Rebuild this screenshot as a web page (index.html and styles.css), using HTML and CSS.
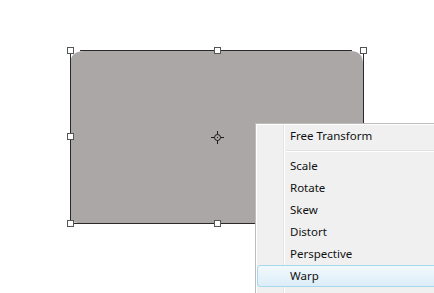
FILE: index.html
```html
<!DOCTYPE html>
<html lang="en">

<head>
    <meta charset="UTF-8">
    <title>Transform Menu</title>
    <link rel="stylesheet" href="styles.css">
</head>

<body>
    <div class="stage">
        <svg class="canvas" width="434" height="293" viewBox="0 0 434 293">
            <!-- shape fill -->
            <path class="shape" d="M84 51 H350 Q363 51 363 64 V223 H78 Q70 223 70 215 V65 Q70 51 84 51 Z" />
            <!-- outline -->
            <path class="edge" d="M70.5 54 V223.5 H363.5 V54 M80 50.5 H352" />

            <!-- handles -->
            <rect class="handle" x="67.5" y="47.5" width="6" height="6" />
            <rect class="handle" x="214.5" y="47.5" width="6" height="6" />
            <rect class="handle" x="360.5" y="47.5" width="6" height="6" />
            <rect class="handle" x="67.5" y="133.5" width="6" height="6" />
            <rect class="handle" x="67.5" y="220.5" width="6" height="6" />
            <rect class="handle" x="214.5" y="220.5" width="6" height="6" />

            <!-- reference point -->
            <g class="pivot">
                <circle cx="217.5" cy="137.5" r="3" />
                <path d="M217.5 131 V134.5 M217.5 140.5 V144 M211 137.5 H214.5 M220.5 137.5 H224" />
                <rect x="217" y="137" width="1" height="1" class="dot" />
            </g>
        </svg>

        <div class="menu">
            <div class="menu-item">Free Transform</div>
            <div class="menu-sep"></div>
            <div class="menu-item">Scale</div>
            <div class="menu-item">Rotate</div>
            <div class="menu-item">Skew</div>
            <div class="menu-item">Distort</div>
            <div class="menu-item">Perspective</div>
            <div class="menu-item active">Warp</div>
            <div class="menu-item">&nbsp;</div>
        </div>
    </div>
</body>

</html>
```

FILE: styles.css
```css
body {
    margin: 0;
    background: #fff;
    font-family: "Noto Sans", "Open Sans", sans-serif;
}

.stage {
    position: relative;
    width: 434px;
    height: 293px;
    overflow: hidden;
}

.canvas {
    display: block;
}

.shape {
    fill: #aba7a6;
}

.edge {
    fill: none;
    stroke: #2a2a2a;
    stroke-width: 1;
}

.handle {
    fill: #fff;
    stroke: #555;
    stroke-width: 1;
}

.pivot circle,
.pivot path {
    fill: none;
    stroke: #1a1a1a;
    stroke-width: 1;
}

.pivot .dot {
    fill: #1a1a1a;
}

/* context menu */
.menu {
    position: absolute;
    left: 255px;
    top: 123px;
    width: 200px;
    padding: 1px;
    background-color: #f0f0f0;
    background-image: linear-gradient(to right, transparent 27px, #e2e3e3 27px, #e2e3e3 28px, #fff 28px, #fff 29px, transparent 29px);
    border: 1px solid #bdbdbd;
    box-shadow: inset 1px 1px 0 #fff;
}

.menu-item {
    height: 20px;
    line-height: 20px;
    padding-left: 32px;
    border: 1px solid transparent;
    border-radius: 3px;
    font-size: 11.5px;
    color: #111;
    white-space: nowrap;
}

.menu-item.active {
    border-color: #a8d8eb;
    background: linear-gradient(#f2f9fd, #dcedf8);
}

.menu-sep {
    height: 0;
    margin: 3px 0 3px 29px;
    border-top: 1px solid #e0e0e0;
    border-bottom: 1px solid #fff;
}
```
